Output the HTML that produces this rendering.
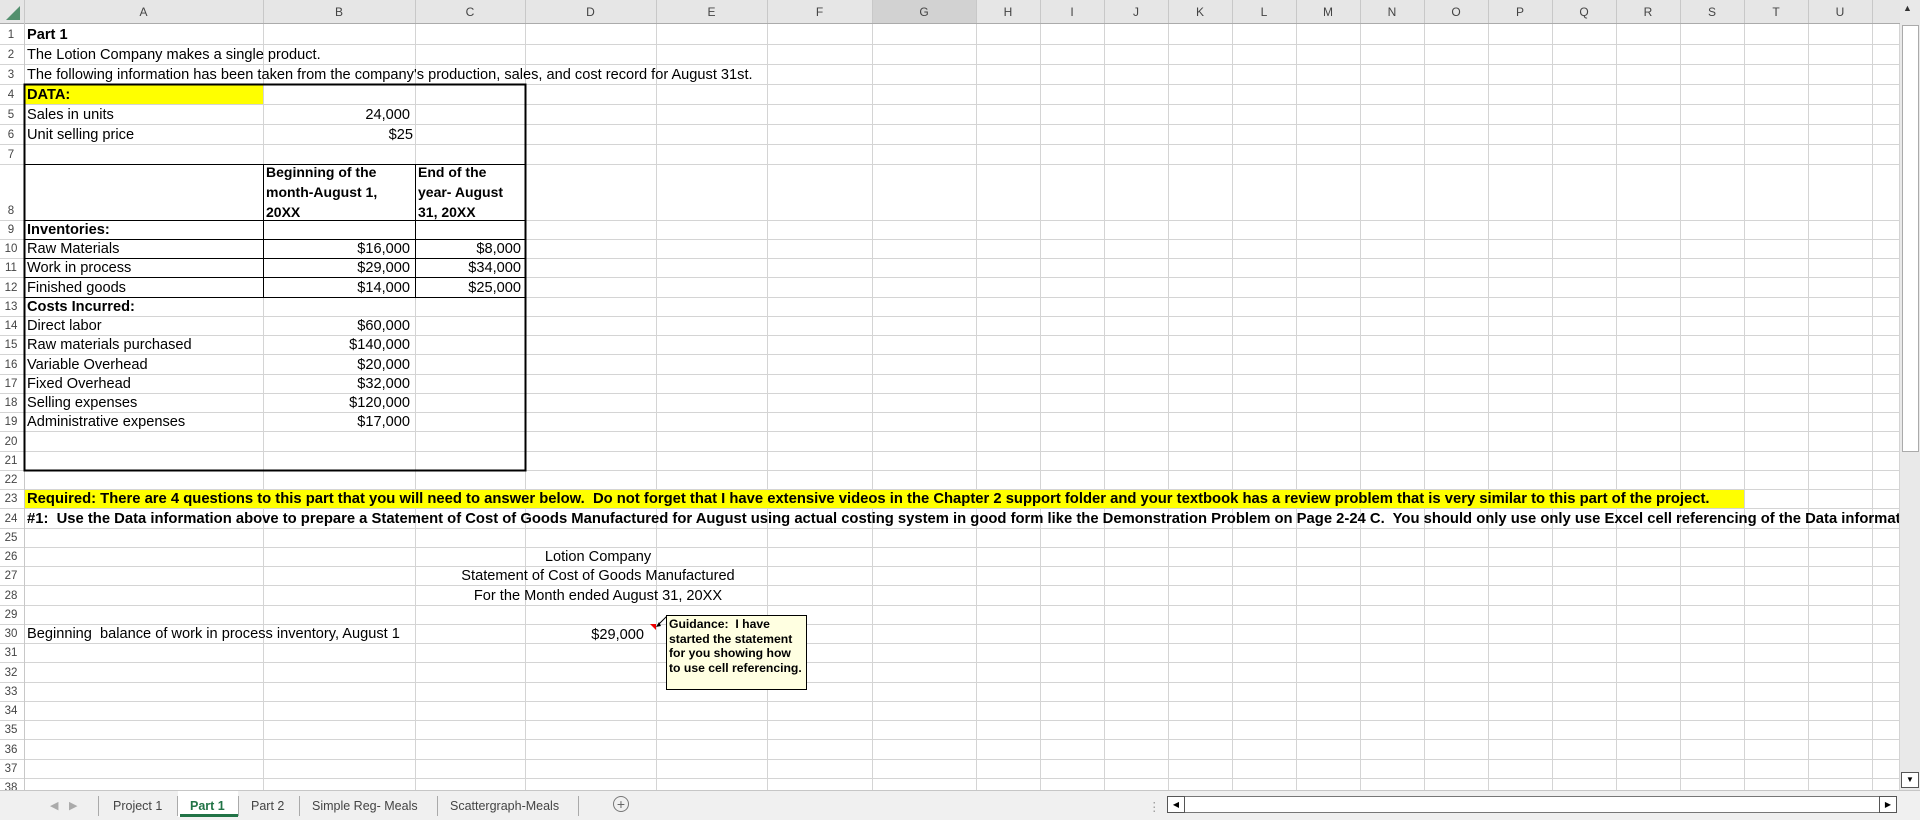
<!DOCTYPE html>
<html><head><meta charset="utf-8"><style>
body{margin:0;width:1920px;height:819px;overflow:hidden;background:#fff;font-family:"Liberation Sans",Arial,sans-serif;position:relative}
.t{position:absolute;white-space:nowrap;font-size:14.6px;line-height:19px;color:#000;margin-top:2px}
.r{text-align:right}
.b{font-weight:bold}
.h{position:absolute;top:0;height:24px;line-height:24px;font-size:12px;color:#444;text-align:center}
.n{position:absolute;left:0;width:22px;font-size:11.5px;color:#444;text-align:center;line-height:19px;margin-top:1px}
.tab{position:absolute;top:799px;font-size:12.5px;color:#444;white-space:nowrap}
.sep{position:absolute;top:796px;width:1px;height:20px;background:#aaa}
</style></head><body>
<div style="position:absolute;left:0;top:0;width:1900px;height:23px;background:#e6e6e6;border-bottom:1px solid #ababab"></div>
<div style="position:absolute;left:872px;top:0;width:104px;height:23px;background:#d2d2d2;border-bottom:1px solid #ababab"></div>
<svg style="position:absolute;left:0;top:0" width="24" height="24"><polygon points="20,6 20,20 6,20" fill="#217346" opacity=".75"/></svg>
<svg style="position:absolute;left:0;top:0" width="1900" height="790" shape-rendering="crispEdges">
<g stroke="#d4d4d4" stroke-width="1">
<line x1="0" x2="1899" y1="44.5" y2="44.5"/><line x1="0" x2="1899" y1="64.5" y2="64.5"/><line x1="0" x2="1899" y1="84.5" y2="84.5"/><line x1="0" x2="1899" y1="104.5" y2="104.5"/><line x1="0" x2="1899" y1="124.5" y2="124.5"/><line x1="0" x2="1899" y1="144.5" y2="144.5"/><line x1="0" x2="1899" y1="164.5" y2="164.5"/><line x1="0" x2="1899" y1="220.5" y2="220.5"/>
<line x1="0" x2="1899" y1="239.5" y2="239.5"/><line x1="0" x2="1899" y1="258.5" y2="258.5"/><line x1="0" x2="1899" y1="277.5" y2="277.5"/><line x1="0" x2="1899" y1="297.5" y2="297.5"/><line x1="0" x2="1899" y1="316.5" y2="316.5"/><line x1="0" x2="1899" y1="335.5" y2="335.5"/><line x1="0" x2="1899" y1="354.5" y2="354.5"/><line x1="0" x2="1899" y1="374.5" y2="374.5"/><line x1="0" x2="1899" y1="393.5" y2="393.5"/><line x1="0" x2="1899" y1="412.5" y2="412.5"/><line x1="0" x2="1899" y1="431.5" y2="431.5"/><line x1="0" x2="1899" y1="451.5" y2="451.5"/><line x1="0" x2="1899" y1="470.5" y2="470.5"/><line x1="0" x2="1899" y1="489.5" y2="489.5"/><line x1="0" x2="1899" y1="508.5" y2="508.5"/><line x1="0" x2="1899" y1="528.5" y2="528.5"/><line x1="0" x2="1899" y1="547.5" y2="547.5"/><line x1="0" x2="1899" y1="566.5" y2="566.5"/><line x1="0" x2="1899" y1="585.5" y2="585.5"/><line x1="0" x2="1899" y1="605.5" y2="605.5"/><line x1="0" x2="1899" y1="624.5" y2="624.5"/><line x1="0" x2="1899" y1="643.5" y2="643.5"/><line x1="0" x2="1899" y1="662.5" y2="662.5"/><line x1="0" x2="1899" y1="682.5" y2="682.5"/><line x1="0" x2="1899" y1="701.5" y2="701.5"/><line x1="0" x2="1899" y1="720.5" y2="720.5"/><line x1="0" x2="1899" y1="739.5" y2="739.5"/><line x1="0" x2="1899" y1="759.5" y2="759.5"/><line x1="0" x2="1899" y1="778.5" y2="778.5"/>
</g>
<g stroke="#d4d4d4">
<line x1="263.5" x2="263.5" y1="24" y2="790"/><line x1="415.5" x2="415.5" y1="24" y2="790"/><line x1="525.5" x2="525.5" y1="24" y2="790"/><line x1="656.5" x2="656.5" y1="24" y2="790"/><line x1="767.5" x2="767.5" y1="24" y2="790"/><line x1="872.5" x2="872.5" y1="24" y2="790"/><line x1="976.5" x2="976.5" y1="24" y2="790"/><line x1="1040.5" x2="1040.5" y1="24" y2="790"/><line x1="1104.5" x2="1104.5" y1="24" y2="790"/><line x1="1168.5" x2="1168.5" y1="24" y2="790"/><line x1="1232.5" x2="1232.5" y1="24" y2="790"/><line x1="1296.5" x2="1296.5" y1="24" y2="790"/><line x1="1360.5" x2="1360.5" y1="24" y2="790"/><line x1="1424.5" x2="1424.5" y1="24" y2="790"/><line x1="1488.5" x2="1488.5" y1="24" y2="790"/><line x1="1552.5" x2="1552.5" y1="24" y2="790"/><line x1="1616.5" x2="1616.5" y1="24" y2="790"/><line x1="1680.5" x2="1680.5" y1="24" y2="790"/><line x1="1744.5" x2="1744.5" y1="24" y2="790"/><line x1="1808.5" x2="1808.5" y1="24" y2="790"/><line x1="1872.5" x2="1872.5" y1="24" y2="790"/><line x1="1899.5" x2="1899.5" y1="24" y2="790"/>
</g>
<g stroke="#c8c8c8"><line x1="24.5" x2="24.5" y1="0" y2="790"/>
<line x1="263.5" x2="263.5" y1="0" y2="23"/><line x1="415.5" x2="415.5" y1="0" y2="23"/><line x1="525.5" x2="525.5" y1="0" y2="23"/><line x1="656.5" x2="656.5" y1="0" y2="23"/><line x1="767.5" x2="767.5" y1="0" y2="23"/><line x1="872.5" x2="872.5" y1="0" y2="23"/><line x1="976.5" x2="976.5" y1="0" y2="23"/><line x1="1040.5" x2="1040.5" y1="0" y2="23"/><line x1="1104.5" x2="1104.5" y1="0" y2="23"/><line x1="1168.5" x2="1168.5" y1="0" y2="23"/><line x1="1232.5" x2="1232.5" y1="0" y2="23"/><line x1="1296.5" x2="1296.5" y1="0" y2="23"/><line x1="1360.5" x2="1360.5" y1="0" y2="23"/><line x1="1424.5" x2="1424.5" y1="0" y2="23"/><line x1="1488.5" x2="1488.5" y1="0" y2="23"/><line x1="1552.5" x2="1552.5" y1="0" y2="23"/><line x1="1616.5" x2="1616.5" y1="0" y2="23"/><line x1="1680.5" x2="1680.5" y1="0" y2="23"/><line x1="1744.5" x2="1744.5" y1="0" y2="23"/><line x1="1808.5" x2="1808.5" y1="0" y2="23"/><line x1="1872.5" x2="1872.5" y1="0" y2="23"/></g>
</svg>
<div style="position:absolute;left:25px;top:85px;width:238px;height:19px;background:#ffff00"></div>
<div style="position:absolute;left:25px;top:490px;width:1719px;height:18px;background:#ffff00"></div>
<svg style="position:absolute;left:0;top:0" width="900" height="800" shape-rendering="crispEdges">
<rect x="24.5" y="84.5" width="501" height="386" fill="none" stroke="#000" stroke-width="2"/>
<g stroke="#000"><line x1="24" x2="526" y1="164.5" y2="164.5"/><line x1="24" x2="526" y1="220.5" y2="220.5"/><line x1="24" x2="526" y1="239.5" y2="239.5"/><line x1="24" x2="526" y1="258.5" y2="258.5"/><line x1="24" x2="526" y1="277.5" y2="277.5"/><line x1="24" x2="526" y1="297.5" y2="297.5"/>
<line x1="263.5" x2="263.5" y1="164" y2="298"/><line x1="415.5" x2="415.5" y1="164" y2="298"/></g>
</svg>
<div class="h" style="left:24px;width:239px">A</div><div class="h" style="left:263px;width:152px">B</div><div class="h" style="left:415px;width:110px">C</div><div class="h" style="left:525px;width:131px">D</div><div class="h" style="left:656px;width:111px">E</div><div class="h" style="left:767px;width:105px">F</div><div class="h" style="left:872px;width:104px">G</div><div class="h" style="left:976px;width:64px">H</div><div class="h" style="left:1040px;width:64px">I</div><div class="h" style="left:1104px;width:64px">J</div><div class="h" style="left:1168px;width:64px">K</div><div class="h" style="left:1232px;width:64px">L</div><div class="h" style="left:1296px;width:64px">M</div><div class="h" style="left:1360px;width:64px">N</div><div class="h" style="left:1424px;width:64px">O</div><div class="h" style="left:1488px;width:64px">P</div><div class="h" style="left:1552px;width:64px">Q</div><div class="h" style="left:1616px;width:64px">R</div><div class="h" style="left:1680px;width:64px">S</div><div class="h" style="left:1744px;width:64px">T</div><div class="h" style="left:1808px;width:64px">U</div>
<div class="n" style="top:25px">1</div><div class="n" style="top:45px">2</div><div class="n" style="top:65px">3</div><div class="n" style="top:85px">4</div><div class="n" style="top:105px">5</div><div class="n" style="top:125px">6</div><div class="n" style="top:145px">7</div><div class="n" style="top:201px">8</div>
<div class="n" style="top:220px">9</div><div class="n" style="top:239px">10</div><div class="n" style="top:258px">11</div><div class="n" style="top:278px">12</div><div class="n" style="top:297px">13</div><div class="n" style="top:316px">14</div><div class="n" style="top:335px">15</div><div class="n" style="top:355px">16</div><div class="n" style="top:374px">17</div><div class="n" style="top:393px">18</div><div class="n" style="top:412px">19</div><div class="n" style="top:432px">20</div><div class="n" style="top:451px">21</div><div class="n" style="top:470px">22</div><div class="n" style="top:489px">23</div><div class="n" style="top:509px">24</div><div class="n" style="top:528px">25</div><div class="n" style="top:547px">26</div><div class="n" style="top:566px">27</div><div class="n" style="top:586px">28</div><div class="n" style="top:605px">29</div><div class="n" style="top:624px">30</div><div class="n" style="top:643px">31</div><div class="n" style="top:663px">32</div><div class="n" style="top:682px">33</div><div class="n" style="top:701px">34</div><div class="n" style="top:720px">35</div><div class="n" style="top:740px">36</div><div class="n" style="top:759px">37</div><div class="n" style="top:778px">38</div>
<div class="t b" style="left:27px;top:24px">Part 1</div>
<div class="t" style="left:27px;top:44px">The Lotion Company makes a single product.</div>
<div class="t" style="left:27px;top:64px">The following information has been taken from the company's production, sales, and cost record for August 31st.</div>
<div class="t b" style="left:27px;top:84px">DATA:</div>
<div class="t" style="left:27px;top:104px">Sales in units</div><div class="t r" style="left:263px;width:147px;top:104px">24,000</div>
<div class="t" style="left:27px;top:124px">Unit selling price</div><div class="t r" style="left:263px;width:150px;top:124px">$25</div>
<div class="t b" style="left:266px;top:160px;line-height:20px;font-size:14px">Beginning of the<br>month-August 1,<br>20XX</div>
<div class="t b" style="left:418px;top:160px;line-height:20px;font-size:14px">End of the<br>year- August<br>31, 20XX</div>
<div class="t b" style="left:27px;top:219px">Inventories:</div>
<div class="t" style="left:27px;top:238px">Raw Materials</div><div class="t r" style="left:263px;width:147px;top:238px">$16,000</div><div class="t r" style="left:415px;width:106px;top:238px">$8,000</div>
<div class="t" style="left:27px;top:257px">Work in process</div><div class="t r" style="left:263px;width:147px;top:257px">$29,000</div><div class="t r" style="left:415px;width:106px;top:257px">$34,000</div>
<div class="t" style="left:27px;top:277px">Finished goods</div><div class="t r" style="left:263px;width:147px;top:277px">$14,000</div><div class="t r" style="left:415px;width:106px;top:277px">$25,000</div>
<div class="t b" style="left:27px;top:296px">Costs Incurred:</div>
<div class="t" style="left:27px;top:315px">Direct labor</div><div class="t r" style="left:263px;width:147px;top:315px">$60,000</div>
<div class="t" style="left:27px;top:334px">Raw materials purchased</div><div class="t r" style="left:263px;width:147px;top:334px">$140,000</div>
<div class="t" style="left:27px;top:354px">Variable Overhead</div><div class="t r" style="left:263px;width:147px;top:354px">$20,000</div>
<div class="t" style="left:27px;top:373px">Fixed Overhead</div><div class="t r" style="left:263px;width:147px;top:373px">$32,000</div>
<div class="t" style="left:27px;top:392px">Selling expenses</div><div class="t r" style="left:263px;width:147px;top:392px">$120,000</div>
<div class="t" style="left:27px;top:411px">Administrative expenses</div><div class="t r" style="left:263px;width:147px;top:411px">$17,000</div>
<div class="t b" style="left:27px;top:488px;font-size:14.8px">Required: There are 4 questions to this part that you will need to answer below.&nbsp; Do not forget that I have extensive videos in the Chapter 2 support folder and your textbook has a review problem that is very similar to this part of the project.</div>
<div style="position:absolute;left:25px;top:509px;width:1874px;height:19px;overflow:hidden"><div class="t b" style="left:2px;top:-1px;font-size:14.8px">#1:&nbsp; Use the Data information above to prepare a Statement of Cost of Goods Manufactured for August using actual costing system in good form like the Demonstration Problem on Page 2-24 C.&nbsp; You should only use only use Excel cell referencing of the Data information</div></div>
<div class="t" style="left:348px;width:500px;text-align:center;top:546px">Lotion Company</div>
<div class="t" style="left:348px;width:500px;text-align:center;top:565px">Statement of Cost of Goods Manufactured</div>
<div class="t" style="left:348px;width:500px;text-align:center;top:585px">For the Month ended August 31, 20XX</div>
<div class="t" style="left:27px;top:623px">Beginning&nbsp; balance of work in process inventory, August 1</div>
<div class="t r" style="left:525px;width:119px;top:624px">$29,000</div>
<svg style="position:absolute;left:640px;top:610px" width="40" height="30"><polygon points="10,14 16,14 16,20" fill="#e00"/><line x1="27" y1="6" x2="18" y2="15" stroke="#000"/><polygon points="16,17 19,12 21,16" fill="#000"/></svg>
<div style="position:absolute;left:666px;top:615px;width:141px;height:75px;background:#ffffe1;border:1px solid #000;font-size:12.2px;font-weight:bold;line-height:14.5px;padding:1px 2px;box-sizing:border-box;white-space:nowrap;overflow:hidden">Guidance:&nbsp; I have<br>started the statement<br>for you showing how<br>to use cell referencing.</div>
<div style="position:absolute;left:1900px;top:0;width:20px;height:790px;background:#e9e9e9"></div>
<div style="position:absolute;left:1902px;top:25px;width:15px;height:425px;background:#fff;border:1px solid #aaa"></div>
<div style="position:absolute;left:1903px;top:3px;font-size:9px;color:#333">▲</div>
<div style="position:absolute;left:1901px;top:772px;width:16px;height:14px;border:1px solid #555;background:#fff;font-size:8px;text-align:center;line-height:14px">▼</div>
<div style="position:absolute;left:0;top:790px;width:1920px;height:29px;background:#f0f0f0;border-top:1px solid #c6c6c6"></div>
<div class="tab" style="left:50px;color:#aaa;font-size:11px">◀</div><div class="tab" style="left:69px;color:#aaa;font-size:11px">▶</div>
<div class="sep" style="left:98px"></div>
<div class="tab" style="left:113px">Project 1</div>
<div class="sep" style="left:177px"></div>
<div style="position:absolute;left:178px;top:791px;width:60px;height:26px;background:#fff"></div>
<div class="tab" style="left:190px;color:#217346;font-weight:bold">Part 1</div>
<div style="position:absolute;left:180px;top:814px;width:58px;height:3px;background:#217346"></div>
<div class="sep" style="left:238px"></div>
<div class="tab" style="left:251px">Part 2</div>
<div class="sep" style="left:299px"></div>
<div class="tab" style="left:312px">Simple Reg- Meals</div>
<div class="sep" style="left:437px"></div>
<div class="tab" style="left:450px">Scattergraph-Meals</div>
<div class="sep" style="left:578px"></div>
<div style="position:absolute;left:613px;top:796px;width:14px;height:14px;border:1.5px solid #777;border-radius:50%;text-align:center;line-height:14px;font-size:14px;color:#666">+</div>
<div class="tab" style="left:1148px;color:#999">⋮</div>
<div style="position:absolute;left:1167px;top:796px;width:728px;height:15px;border:1px solid #777;background:#fff"></div>
<div style="position:absolute;left:1167px;top:796px;width:16px;height:15px;border:1px solid #555;font-size:8px;line-height:15px;text-align:center">◀</div>
<div style="position:absolute;left:1879px;top:796px;width:16px;height:15px;border:1px solid #555;font-size:8px;line-height:15px;text-align:center">▶</div>
</body></html>
